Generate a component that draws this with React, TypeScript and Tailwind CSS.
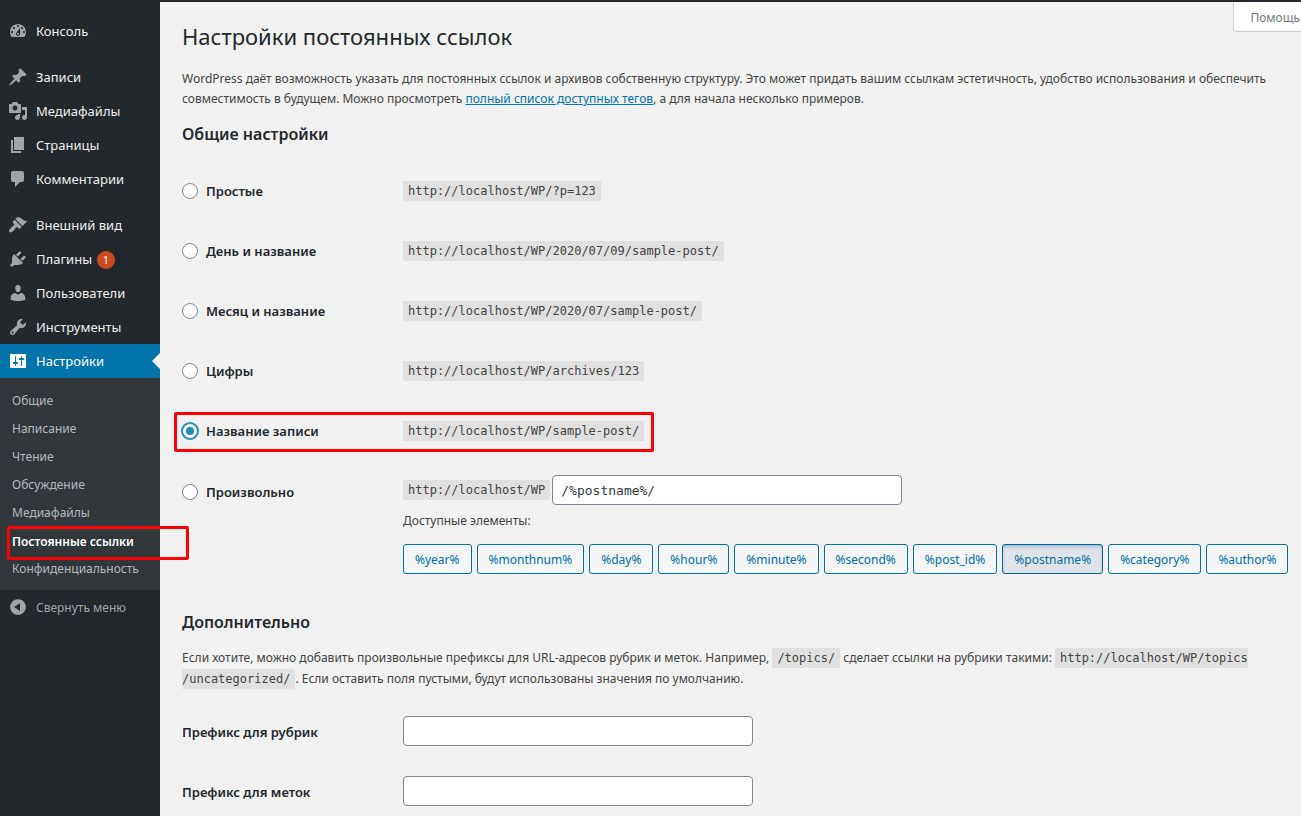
import type { ReactNode } from 'react';

type MenuItem = { label: string; icon: string; badge?: number; active?: boolean };

const icons = {
  dashboard:
    'M3.76 16h12.48c1.1-1.37 1.76-3.11 1.76-5 0-4.42-3.58-8-8-8s-8 3.58-8 8c0 1.89.66 3.63 1.76 5zM10 4c.55 0 1 .45 1 1s-.45 1-1 1-1-.45-1-1 .45-1 1-1zM6 6c.55 0 1 .45 1 1s-.45 1-1 1-1-.45-1-1 .45-1 1-1zm8 0c.55 0 1 .45 1 1s-.45 1-1 1-1-.45-1-1 .45-1 1-1zm-5.37 5.55L12 7v6c0 1.1-.9 2-2 2s-2-.9-2-2c0-.57.24-1.08.63-1.45zM4 10c.55 0 1 .45 1 1s-.45 1-1 1-1-.45-1-1 .45-1 1-1zm12 0c.55 0 1 .45 1 1s-.45 1-1 1-1-.45-1-1 .45-1 1-1zm-5 3c0-.55-.45-1-1-1s-1 .45-1 1 .45 1 1 1 1-.45 1-1z',
  post: 'M10.44 3.02l1.82-1.82 6.36 6.35-1.83 1.82c-1.05-.68-2.48-.57-3.41.36l-.75.75c-.92.93-1.04 2.35-.35 3.41l-1.83 1.82-2.41-2.41-2.8 2.79c-.42.42-3.38 2.71-3.8 2.29s1.86-3.39 2.28-3.81l2.79-2.79L4.1 9.36l1.83-1.82c1.05.69 2.48.57 3.4-.36l.75-.75c.93-.92 1.05-2.35.36-3.41z',
  media:
    'M13 11V4c0-.55-.45-1-1-1h-1.67L9 1H5L3.67 3H2c-.55 0-1 .45-1 1v7c0 .55.45 1 1 1h10c.55 0 1-.45 1-1zM7 4.5c1.38 0 2.5 1.12 2.5 2.5S8.38 9.5 7 9.5 4.5 8.38 4.5 7 5.62 4.5 7 4.5zM14 6h5v10.5c0 1.38-1.12 2.5-2.5 2.5S14 17.88 14 16.5s1.12-2.5 2.5-2.5c.17 0 .34.02.5.05V9h-3V6zm-4 8.05V13h2v3.5c0 1.38-1.12 2.5-2.5 2.5S7 17.88 7 16.5 8.12 14 9.5 14c.17 0 .34.02.5.05z',
  page: 'M6 15V2h10v13H6zm-1 1h8v2H3V5h2v11z',
  comments: 'M5 2h9c1.1 0 2 .9 2 2v7c0 1.1-.9 2-2 2h-2l-5 5v-5H5c-1.1 0-2-.9-2-2V4c0-1.1.9-2 2-2z',
  appearance:
    'M14.48 11.06L7.41 3.99l1.5-1.5c.5-.56 2.3-.47 3.51.32 1.21.8 1.43 1.28 2.91 2.1 1.18.64 2.45 1.26 4.45.85zm-.71.71L6.7 4.7 4.93 6.47c-.39.39-.39 1.02 0 1.41l1.06 1.06c.39.39.39 1.03 0 1.42-.6.6-1.43 1.11-2.21 1.69-.35.26-.7.53-1.01.84C1.43 14.23.4 16.08 1.4 17.07c.99 1 2.84-.03 4.18-1.36.31-.31.58-.66.85-1.02.57-.78 1.08-1.61 1.69-2.21.39-.39 1.02-.39 1.41 0l1.06 1.06c.39.39 1.02.39 1.41 0z',
  plugins:
    'M13.11 4.36L9.87 7.6 8 5.73l3.24-3.24c.35-.34 1.05-.2 1.56.32.52.51.66 1.21.31 1.55zm-8 1.77l.91-1.12 9.01 9.01-1.19.84c-.71.71-2.63 1.16-3.82 1.16H6.14L4.9 17.26c-.59.59-1.54.59-2.12 0-.59-.58-.59-1.53 0-2.12l1.24-1.24v-3.88c0-1.13.4-3.19 1.09-3.89zm7.26 3.97l3.24-3.24c.34-.35 1.04-.21 1.55.31.52.51.66 1.21.31 1.55l-3.24 3.25z',
  users:
    'M10 9.25c-2.27 0-2.73-3.44-2.73-3.44C7 4.02 7.82 2 9.97 2c2.16 0 2.98 2.02 2.71 3.81 0 0-.41 3.44-2.68 3.44zm0 2.57L12.72 10c2.39 0 4.52 2.33 4.52 4.53v2.49s-3.65 1.13-7.24 1.13c-3.65 0-7.24-1.13-7.24-1.13v-2.49c0-2.25 1.94-4.48 4.47-4.48z',
  tools:
    'M16.68 9.77c-1.34 1.34-3.3 1.67-4.95.99l-5.41 6.52c-.99.99-2.59.99-3.58 0s-.99-2.59 0-3.57l6.52-5.42c-.68-1.65-.35-3.61.99-4.95 1.28-1.28 3.12-1.62 4.72-1.06l-2.89 2.89 2.82 2.82 2.86-2.87c.53 1.58.18 3.39-1.08 4.65zM3.81 16.21c.4.39 1.04.39 1.43 0 .4-.4.4-1.04 0-1.43-.39-.4-1.03-.4-1.43 0-.39.39-.39 1.03 0 1.43z',
  settings:
    'M18 16V4c0-.55-.45-1-1-1H3c-.55 0-1 .45-1 1v12c0 .55.45 1 1 1h14c.55 0 1-.45 1-1zM8 11h1c.55 0 1 .45 1 1s-.45 1-1 1H8v1.5c0 .28-.22.5-.5.5s-.5-.22-.5-.5V13H6c-.55 0-1-.45-1-1s.45-1 1-1h1V5.5c0-.28.22-.5.5-.5s.5.22.5.5V11zm5-2h-1c-.55 0-1-.45-1-1s.45-1 1-1h1V5.5c0-.28.22-.5.5-.5s.5.22.5.5V7h1c.55 0 1 .45 1 1s-.45 1-1 1h-1v5.5c0 .28-.22.5-.5.5s-.5-.22-.5-.5V9z',
  collapse:
    'M10 2.16c4.33 0 7.84 3.51 7.84 7.84s-3.51 7.84-7.84 7.84S2.16 14.33 2.16 10 5.67 2.16 10 2.16zm2 11.72V6.12L6.18 9.97z',
};

const menuGroups: MenuItem[][] = [
  [{ label: 'Консоль', icon: icons.dashboard }],
  [
    { label: 'Записи', icon: icons.post },
    { label: 'Медиафайлы', icon: icons.media },
    { label: 'Страницы', icon: icons.page },
    { label: 'Комментарии', icon: icons.comments },
  ],
  [
    { label: 'Внешний вид', icon: icons.appearance },
    { label: 'Плагины', icon: icons.plugins, badge: 1 },
    { label: 'Пользователи', icon: icons.users },
    { label: 'Инструменты', icon: icons.tools },
    { label: 'Настройки', icon: icons.settings, active: true },
  ],
];

const submenu = [
  'Общие',
  'Написание',
  'Чтение',
  'Обсуждение',
  'Медиафайлы',
  'Постоянные ссылки',
  'Конфиденциальность',
];

const structures = [
  { id: 'plain', label: 'Простые', url: 'http://localhost/WP/?p=123' },
  { id: 'day', label: 'День и название', url: 'http://localhost/WP/2020/07/09/sample-post/' },
  { id: 'month', label: 'Месяц и название', url: 'http://localhost/WP/2020/07/sample-post/' },
  { id: 'numeric', label: 'Цифры', url: 'http://localhost/WP/archives/123' },
  { id: 'name', label: 'Название записи', url: 'http://localhost/WP/sample-post/' },
];

const tags = [
  '%year%',
  '%monthnum%',
  '%day%',
  '%hour%',
  '%minute%',
  '%second%',
  '%post_id%',
  '%postname%',
  '%category%',
  '%author%',
];

function Icon({ path }: { path: string }) {
  return (
    <svg viewBox="0 0 20 20" className="size-5 shrink-0" fill="currentColor" aria-hidden="true">
      <path d={path} />
    </svg>
  );
}

function Code({ children }: { children: ReactNode }) {
  return (
    <code className="bg-[#e0e0e0] px-[5px] py-[3px] font-['DejaVu_Sans_Mono',monospace] text-[12px] leading-none">
      {children}
    </code>
  );
}

function Sidebar() {
  return (
    <nav className="w-40 shrink-0 bg-[#23282d] pt-3 text-[#eeeeee]">
      <div className="flex flex-col gap-3">
        {menuGroups.map((group, i) => (
          <ul key={i}>
            {group.map((item) => (
              <li key={item.label}>
                <a
                  href="#"
                  className={
                    item.active
                      ? 'relative flex h-[34px] items-center gap-2 bg-[#0073aa] pl-2 text-[13px] text-white'
                      : 'flex h-[34px] items-center gap-2 pl-2 text-[13px]'
                  }
                >
                  <span className={item.active ? 'text-white' : 'text-[#a0a5aa]'}>
                    <Icon path={item.icon} />
                  </span>
                  <span className="flex items-center gap-[5px] pt-0.5">
                    {item.label}
                    {item.badge && (
                      <span className="flex size-[18px] items-center justify-center rounded-full bg-[#ca4a1f] text-[11px] text-white">
                        {item.badge}
                      </span>
                    )}
                  </span>
                  {item.active && (
                    <span className="absolute top-[9px] right-0 border-8 border-l-0 border-transparent border-r-[#f1f1f1]" />
                  )}
                </a>
              </li>
            ))}
          </ul>
        ))}
      </div>
      <ul className="bg-[#32373c] pt-[9px] pb-[7px] text-[12px] text-[#b4b9be]">
        {submenu.map((label) =>
          label === 'Постоянные ссылки' ? (
            <li key={label} className="relative">
              <a
                href="#"
                className="flex h-7 items-center pt-0.5 pl-3 font-semibold whitespace-nowrap text-white"
              >
                {label}
              </a>
              <span className="pointer-events-none absolute -top-px left-[7px] z-10 h-[34px] w-[182px] rounded-xs border-3 border-[#fb0007]" />
            </li>
          ) : (
            <li key={label}>
              <a href="#" className="flex h-7 items-center pl-3 whitespace-nowrap">
                {label}
              </a>
            </li>
          ),
        )}
      </ul>
      <button type="button" className="flex h-[34px] items-center gap-2 pl-2 text-[12px] text-[#a0a5aa]">
        <Icon path={icons.collapse} />
        <span className="pt-0.5">Свернуть меню</span>
      </button>
    </nav>
  );
}

function Radio({ id, checked }: { id: string; checked?: boolean }) {
  return (
    <span className="relative flex size-4 shrink-0 items-center justify-center">
      <input
        id={id}
        type="radio"
        name="structure"
        defaultChecked={checked}
        className="peer size-4 appearance-none rounded-full border border-[#7e8993] bg-white checked:border-[#1e8cbe] checked:shadow-[0_0_0_1px_#1e8cbe]"
      />
      <span className="pointer-events-none absolute top-1 left-1 hidden size-2 rounded-full bg-[#1e8cbe] peer-checked:block" />
    </span>
  );
}

const fieldClass =
  "h-[30px] w-[350px] rounded-[4px] border border-[#7e8993] bg-white px-2 font-['DejaVu_Sans_Mono',monospace] text-[13px] text-[#32373c]";

export default function App() {
  return (
    <div className="flex min-h-screen overflow-hidden border-t-2 border-[#23282d] bg-[#f1f1f1] font-['Noto_Sans',sans-serif] text-[12px] text-[#444444]">
      <Sidebar />
      <main className="relative min-w-0 grow pt-[19px] pl-[22px]">
        <button
          type="button"
          className="absolute top-0 -right-6 h-[30px] rounded-b-[4px] border border-t-0 border-[#ccd0d4] bg-white pt-0.5 pr-6 pl-4 text-[12px] text-[#72777c]"
        >
          Помощь
        </button>
        <h1 className="text-[22px] leading-[30px] text-[#23282d]">Настройки постоянных ссылок</h1>
        <p className="mt-[18px] leading-5 whitespace-nowrap">
          WordPress даёт возможность указать для постоянных ссылок и архивов собственную структуру. Это
          может придать вашим ссылкам эстетичность, удобство использования и обеспечить
          <br />
          совместимость в будущем. Можно просмотреть{' '}
          <a href="#" className="text-[#0073aa] underline">
            полный список доступных тегов
          </a>
          , а для начала несколько примеров.
        </p>
        <h2 className="mt-[15px] text-[16px] leading-[20px] font-semibold text-[#23282d]">Общие настройки</h2>

        <div className="mt-[17px]">
          {structures.map((s) => (
            <div key={s.id} className="relative flex h-[60px] items-center">
              <label
                htmlFor={s.id}
                className="flex w-[221px] shrink-0 items-center gap-2 text-[13px] font-semibold text-[#23282d]"
              >
                <Radio id={s.id} checked={s.id === 'name'} />
                <span className="pt-0.5">{s.label}</span>
              </label>
              <div>
                <Code>{s.url}</Code>
              </div>
              {s.id === 'name' && (
                <span className="pointer-events-none absolute top-[11px] -left-2 h-10 w-[480px] rounded-xs border-3 border-[#fb0007]" />
              )}
            </div>
          ))}
          <div className="flex items-start pt-[14px]">
            <label
              htmlFor="custom"
              className="flex h-[34px] w-[221px] shrink-0 items-center gap-2 text-[13px] font-semibold text-[#23282d]"
            >
              <Radio id="custom" />
              <span className="pt-0.5">Произвольно</span>
            </label>
            <div>
              <div className="flex h-[30px] items-center gap-0.5">
                <div>
                  <Code>http://localhost/WP</Code>
                </div>
                <input aria-label="Произвольная структура" defaultValue="/%postname%/" className={fieldClass} />
              </div>
              <p className="mt-1.5 leading-5">Доступные элементы:</p>
              <div className="mt-[13px] flex gap-[5px]">
                {tags.map((tag) => (
                  <button
                    key={tag}
                    type="button"
                    className={
                      tag === '%postname%'
                        ? 'h-[30px] rounded-[3px] border border-[#006799] bg-[#e0e3e7] px-[11px] pt-0.5 text-[12px] text-[#0071a1] shadow-[inset_0_2px_5px_-3px_#006799]'
                        : 'h-[30px] rounded-[3px] border border-[#0071a1] bg-[#f3f5f6] px-[11px] pt-0.5 text-[12px] text-[#0071a1]'
                    }
                  >
                    {tag}
                  </button>
                ))}
              </div>
            </div>
          </div>
        </div>

        <h2 className="mt-[38px] text-[16px] leading-[20px] font-semibold text-[#23282d]">Дополнительно</h2>
        <p className="mt-[15px] leading-[21px] whitespace-nowrap">
          Если хотите, можно добавить произвольные префиксы для URL-адресов рубрик и меток. Например,{' '}
          <Code>/topics/</Code> сделает ссылки на рубрики такими:{' '}
          <Code>
            http://localhost/WP/topics
            <br />
            /uncategorized/
          </Code>
          . Если оставить поля пустыми, будут использованы значения по умолчанию.
        </p>
        <div className="mt-[27px] flex flex-col gap-[30px]">
          <div className="flex items-center">
            <label htmlFor="category-base" className="w-[221px] shrink-0 pt-1 text-[13px] font-semibold text-[#23282d]">
              Префикс для рубрик
            </label>
            <input id="category-base" className={fieldClass} />
          </div>
          <div className="flex items-center">
            <label htmlFor="tag-base" className="w-[221px] shrink-0 pt-1 text-[13px] font-semibold text-[#23282d]">
              Префикс для меток
            </label>
            <input id="tag-base" className={fieldClass} />
          </div>
        </div>
      </main>
    </div>
  );
}
